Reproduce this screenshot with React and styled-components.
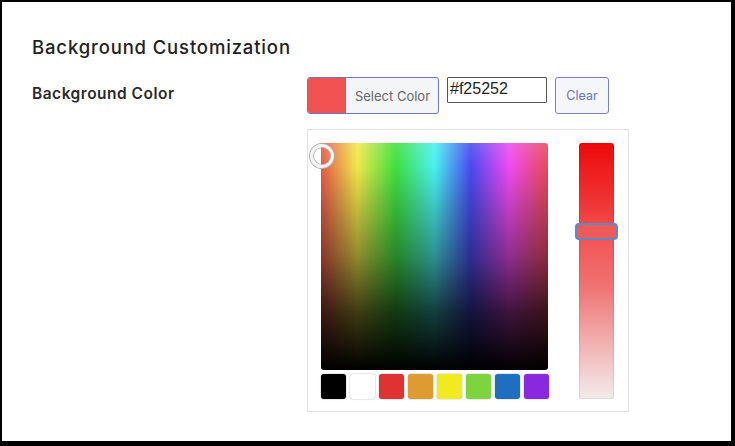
import React from "react";
import styled, { createGlobalStyle } from "styled-components";

const Global = createGlobalStyle`
  html, body { margin: 0; padding: 0; background: #000; }
  body { padding: 2px 0 0 2px; font-family: Inter, "Noto Sans", sans-serif; }
  * { box-sizing: border-box; }
`;

const Frame = styled.div`
  width: 729px;
  height: 439px;
  background: #fff;
  padding: 34px 30px 0 30px;
`;

const Title = styled.h2`
  margin: 0 0 19px 0;
  font-size: 18.5px;
  line-height: 22px;
  font-weight: 500;
  letter-spacing: 0.85px;
  color: #222;
`;

const Row = styled.div`
  display: flex;
  align-items: flex-start;
`;

const Label = styled.div`
  width: 275px;
  flex: none;
  font-size: 15.5px;
  font-weight: 600;
  letter-spacing: 0.5px;
  color: #2a2a2a;
  padding-top: 7px;
  line-height: 20px;
`;

const Controls = styled.div`
  display: flex;
  flex-direction: column;
  gap: 15px;
`;

const Toolbar = styled.div`
  display: flex;
  align-items: flex-start;
  gap: 8px;
`;

const SelectButton = styled.button`
  display: flex;
  align-items: stretch;
  width: 132px;
  height: 37px;
  padding: 0;
  border: 1px solid #6e76d2;
  border-radius: 3px;
  background: #f4f5f7;
  overflow: hidden;
  cursor: pointer;
  font-family: Inter, "Noto Sans", sans-serif;
`;

const Chip = styled.span`
  width: 38px;
  flex: none;
  background: ${(p) => p.$color};
`;

const ButtonText = styled.span`
  flex: 1;
  display: flex;
  align-items: center;
  justify-content: center;
  font-size: 13px;
  color: #666;
  padding-left: 1px;
`;

const HexInput = styled.input`
  width: 100px;
  height: 26px;
  border: 1px solid #555;
  border-radius: 1px;
  padding: 0 2px 3px;
  font-family: "Liberation Sans", Arial, sans-serif;
  font-size: 16px;
  color: #222;
  background: #fff;
  outline: none;
`;

const ClearButton = styled.button`
  width: 54px;
  height: 37px;
  border: 1px solid #7a80d8;
  border-radius: 3px;
  background: #f5f6fa;
  color: #6b72c8;
  font-family: Inter, "Noto Sans", sans-serif;
  font-size: 12.5px;
  padding: 0;
  cursor: pointer;
`;

const Panel = styled.div`
  width: 322px;
  border: 1px solid #e2e2e2;
  padding: 13px 14px 12px 13px;
  display: flex;
  gap: 30px;
`;

const LeftCol = styled.div`
  display: flex;
  flex-direction: column;
  gap: 4px;
`;

const Saturation = styled.div`
  position: relative;
  width: 227px;
  height: 227px;
  border-radius: 3px;
  background:
    linear-gradient(to bottom, rgba(255,255,255,0.12) 0%, rgba(0,0,0,0) 10%, rgba(0,0,0,0.4) 50%, rgba(0,0,0,0.75) 75%, #000 100%),
    linear-gradient(to right, #e8584a 0%, #f0e84a 16%, #3fe03f 33%, #4af0f0 50%, #4a4af0 66%, #f04af0 83%, #e84a5a 100%);
`;

const Handle = styled.div`
  position: absolute;
  left: -11px;
  top: 1px;
  width: 24px;
  height: 24px;
  border-radius: 50%;
  border: 3px solid #f4f4f4;
  box-shadow: 0 0 0 1px #aaa, inset 0 0 0 1px #aaa;
`;

const Swatches = styled.div`
  display: flex;
  gap: 4px;
`;

const Swatch = styled.div`
  width: 25px;
  height: 25px;
  border-radius: 3px;
  background: ${(p) => p.$color};
  box-shadow: 0 0 1.5px rgba(0,0,0,0.45);
`;

const HueBar = styled.div`
  position: relative;
  width: 35px;
  height: 256px;
  border-radius: 3px;
  background: linear-gradient(to bottom, #ee0a0a 0%, #f03838 25%, #f25252 35%, #f07070 55%, #f2b0b0 78%, #f2ecec 100%);
  box-shadow: inset 0 0 2px rgba(0,0,0,0.25);
`;

const BarHandle = styled.div`
  position: absolute;
  left: -4px;
  top: 80px;
  width: 43px;
  height: 17px;
  border-radius: 4px;
  border: 2.5px solid #5a8cc2;
  background: #ee5a5a;
`;

const swatches = ["#000000", "#ffffff", "#e03232", "#e09a32", "#f0ea20", "#7ed43e", "#1e6fc0", "#8a28e0"];

export default function App() {
  return (
    <>
      <Global />
      <Frame>
        <Title>Background Customization</Title>
        <Row>
          <Label>Background Color</Label>
          <Controls>
            <Toolbar>
              <SelectButton>
                <Chip $color="#f25252" />
                <ButtonText>Select Color</ButtonText>
              </SelectButton>
              <HexInput defaultValue="#f25252" />
              <ClearButton>Clear</ClearButton>
            </Toolbar>
            <Panel>
              <LeftCol>
                <Saturation>
                  <Handle />
                </Saturation>
                <Swatches>
                  {swatches.map((c) => (
                    <Swatch key={c} $color={c} />
                  ))}
                </Swatches>
              </LeftCol>
              <HueBar>
                <BarHandle />
              </HueBar>
            </Panel>
          </Controls>
        </Row>
      </Frame>
    </>
  );
}
